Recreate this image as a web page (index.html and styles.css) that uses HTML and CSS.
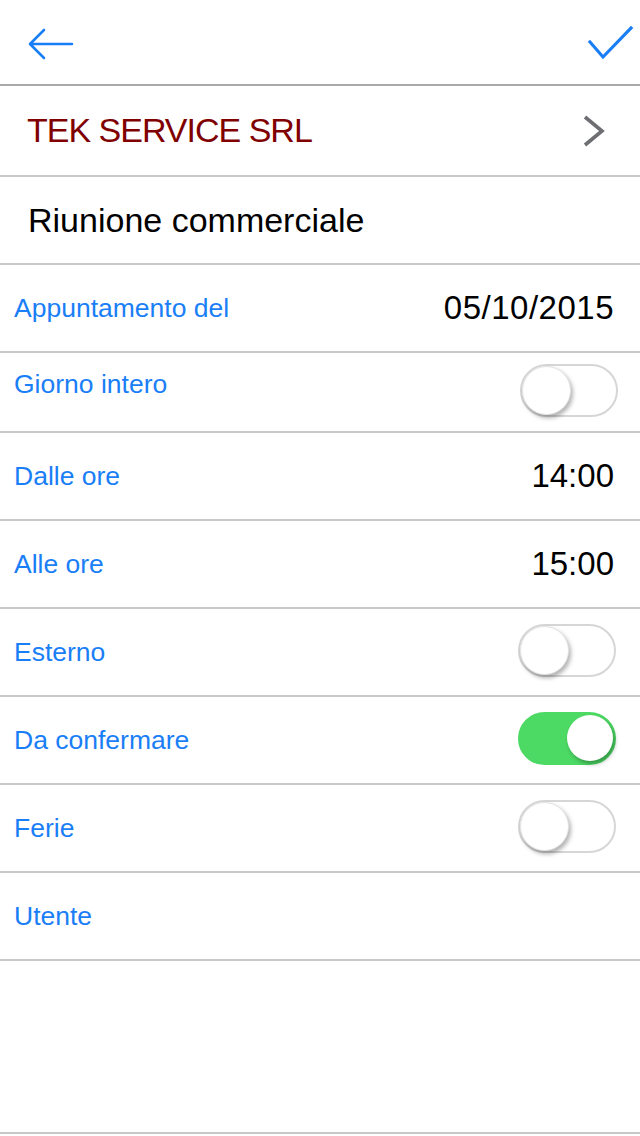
FILE: index.html
```html
<!DOCTYPE html>
<html lang="it">
<head>
  <!-- Metadati -->
  <meta charset="UTF-8">
  <meta name="viewport" content="width=device-width, initial-scale=1.0">
  <title>Appuntamento</title>
  <!-- Stili CSS -->
  <link rel="stylesheet" href="styles.css">
</head>
<body>
  <!-- Barra superiore con indietro e conferma -->
  <header class="barra">
    <svg class="icona-indietro" width="48" height="32" viewBox="0 0 48 32">
      <path d="M2 16 H44 M16 2 L2 16 L16 30" fill="none" stroke="#1a7ef7" stroke-width="2.6" stroke-linecap="round" stroke-linejoin="round"/>
    </svg>
    <svg class="icona-conferma" width="48" height="38" viewBox="0 0 48 38">
      <path d="M4 18 L17 33 L45 4" fill="none" stroke="#1a7ef7" stroke-width="3.2" stroke-linecap="square"/>
    </svg>
  </header>

  <!-- Cliente -->
  <div class="riga riga-cliente">
    <span class="cliente">TEK SERVICE SRL</span>
    <svg class="freccia" width="24" height="36" viewBox="0 0 24 36">
      <path d="M3 4 L20 18 L3 32" fill="none" stroke="#6e6f73" stroke-width="3.6"/>
    </svg>
  </div>

  <!-- Oggetto dell'appuntamento -->
  <div class="riga riga-oggetto">
    <span class="oggetto">Riunione commerciale</span>
  </div>

  <!-- Campi del modulo -->
  <div class="riga">
    <span class="etichetta">Appuntamento del</span>
    <span class="valore valore-data">05/10/2015</span>
  </div>

  <div class="riga riga-corta">
    <span class="etichetta">Giorno intero</span>
    <span class="interruttore"><span class="pomello"></span></span>
  </div>

  <div class="riga">
    <span class="etichetta">Dalle ore</span>
    <span class="valore">14:00</span>
  </div>

  <div class="riga">
    <span class="etichetta">Alle ore</span>
    <span class="valore">15:00</span>
  </div>

  <div class="riga">
    <span class="etichetta">Esterno</span>
    <span class="interruttore"><span class="pomello"></span></span>
  </div>

  <div class="riga">
    <span class="etichetta">Da confermare</span>
    <span class="interruttore attivo"><span class="pomello"></span></span>
  </div>

  <div class="riga">
    <span class="etichetta">Ferie</span>
    <span class="interruttore"><span class="pomello"></span></span>
  </div>

  <div class="riga">
    <span class="etichetta">Utente</span>
  </div>

  <!-- Spazio vuoto in fondo -->
  <div class="vuoto"></div>
</body>
</html>
```

FILE: styles.css
```css
body {
  margin: 0;
  width: 640px;
  background: #fff;
  font-family: "Liberation Sans", Arial, sans-serif;
}
/* Corpo della pagina */

.barra {
  height: 84px;
  display: flex;
  align-items: center;
  justify-content: space-between;
  border-bottom: 2px solid #a9a9a9;
}
/* Barra superiore */

.icona-indietro {
  margin: 4px 0 0 28px;
}

.icona-conferma {
  margin: 2px 6px 0 0;
}

.riga {
  height: 86px;
  display: flex;
  align-items: center;
  justify-content: space-between;
  padding: 0 24px 0 14px;
  border-bottom: 2px solid #c8c8c8;
}
/* Righe del modulo */

.riga-cliente {
  height: 89px;
  padding: 0 34px 0 27px;
}

.riga-oggetto {
  padding-left: 28px;
}

.riga-corta {
  height: 78px;
  padding-right: 22px;
}

.riga-corta .etichetta {
  margin-bottom: 16px;
}

.riga-corta .interruttore {
  margin-bottom: 4px;
}

.cliente {
  font-size: 34px;
  letter-spacing: -1px;
  color: #800000;
}

.oggetto {
  font-size: 34px;
  color: #000;
}

.etichetta {
  font-size: 26.5px;
  color: #1a7ef7;
}

.valore {
  font-size: 33px;
  color: #000;
  margin-right: 2px;
}

.valore-data {
  letter-spacing: 0.5px;
}

.interruttore {
  width: 98px;
  height: 53px;
  box-sizing: border-box;
  border: 2px solid #d6d6d6;
  border-radius: 27px;
  display: flex;
  align-items: center;
  margin-bottom: 4px;
}
/* Interruttore spento */

.pomello {
  width: 49px;
  height: 49px;
  box-sizing: border-box;
  border-radius: 50%;
  background: #fff;
  border: 1px solid #e2e2e2;
  box-shadow: 2px 3px 4px rgba(0, 0, 0, 0.3);
}

.interruttore.attivo {
  background: #4cd964;
  border-color: #4cd964;
  justify-content: flex-end;
}
/* Interruttore acceso */

.interruttore.attivo .pomello {
  width: 46px;
  height: 46px;
  margin-right: 1px;
  border: none;
}

.vuoto {
  height: 171px;
  border-bottom: 2px solid #c8c8c8;
}
```
